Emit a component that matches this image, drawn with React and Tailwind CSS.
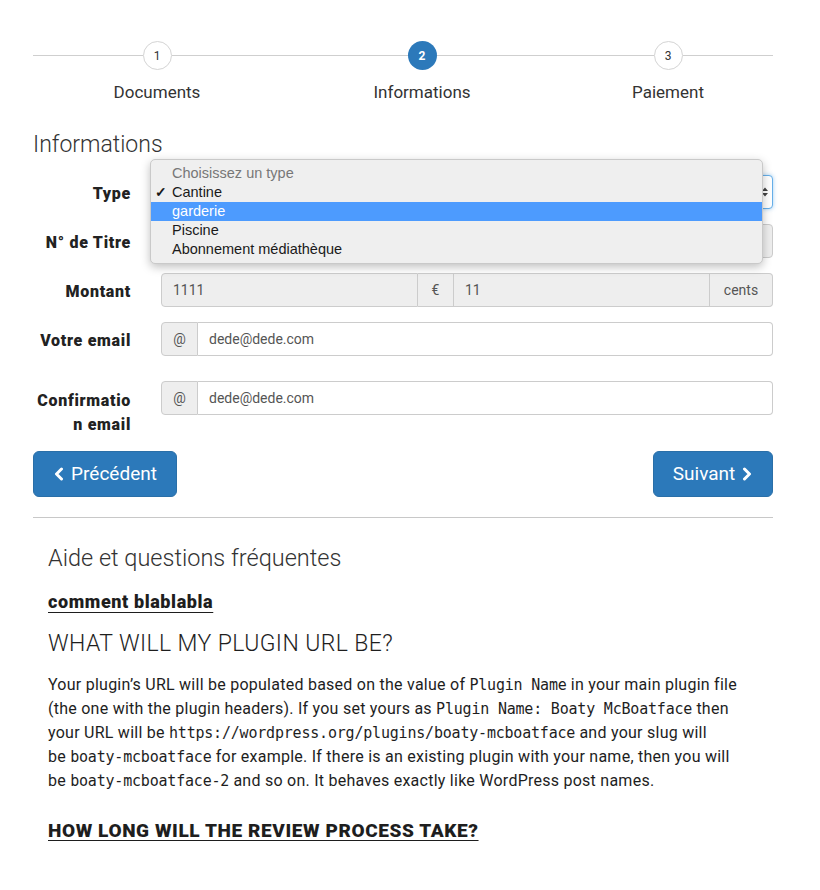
import React from "react";

const BLUE = "bg-[#2c79ba]";

function Step({ n, label, active }) {
  return (
    <div className="flex flex-col items-center">
      <div className="flex w-full items-center">
        <div className="h-px flex-1 bg-[#cfcfcf]" />
        <div
          className={
            "flex h-[29px] w-[29px] items-center justify-center rounded-full text-[12px] " +
            (active
              ? "bg-[#2c79ba] font-bold text-white"
              : "border border-[#d4d4d4] bg-white text-[#333]")
          }
        >
          {n}
        </div>
        <div className="h-px flex-1 bg-[#cfcfcf]" />
      </div>
      <div className="mt-[10px] text-[17px] leading-[24px] text-[#333]">{label}</div>
    </div>
  );
}

function Label({ children, className = "" }) {
  return (
    <div className={"w-[98px] shrink-0 text-right text-[16px] font-black leading-[24px] tracking-[0.7px] text-[#222] " + className}>
      {children}
    </div>
  );
}

function Code({ children }) {
  return <span className="font-['DejaVu_Sans_Mono',monospace] text-[15px] tracking-[-0.2px]">{children}</span>;
}

export default function App() {
  return (
    <div className="min-h-[890px] bg-white font-['Roboto','Liberation_Sans',sans-serif] text-[#333]">
      <div className="ml-[33px] w-[740px] pt-[41px]">
        {/* Stepper */}
        <div className="grid grid-cols-[248px_282px_1fr]">
          <Step n="1" label="Documents" />
          <Step n="2" label="Informations" active />
          <Step n="3" label="Paiement" />
        </div>

        <h2 className="mt-[28px] text-[23px] font-light leading-[26px] text-[#333]">Informations</h2>

        {/* Form */}
        <div className="relative mt-[17px]">
          <div className="flex items-center">
            <Label className="pt-[4px]">Type</Label>
            <div className="ml-[30px] flex h-[34px] flex-1 items-center justify-end rounded-[4px] border border-[#66afe9] bg-white pr-[3px] shadow-[0_0_4px_rgba(102,175,233,0.6)]">
              <svg width="8" height="12" viewBox="0 0 8 12">
                <path d="M1 5 L4 1.5 L7 5 Z M1 7 L4 10.5 L7 7 Z" fill="#444" />
              </svg>
            </div>
          </div>

          <div className="mt-[15px] flex items-center">
            <Label className="pt-[4px]">N° de Titre</Label>
            <div className="ml-[30px] h-[34px] flex-1 rounded-[4px] border border-[#ccc] bg-[#eee]" />
          </div>

          <div className="mt-[15px] flex items-center">
            <Label className="pt-[4px]">Montant</Label>
            <div className="ml-[30px] flex h-[34px] flex-1 text-[14px] text-[#555]">
              <div className="flex flex-1 items-center rounded-l-[4px] border border-[#ccc] bg-[#eee] px-[11px]">1111</div>
              <div className="flex w-[35px] items-center justify-center border-y border-[#ccc] bg-[#eee]">€</div>
              <div className="flex flex-1 items-center border border-[#ccc] bg-[#eee] px-[11px]">11</div>
              <div className="flex w-[63px] items-center justify-center rounded-r-[4px] border-y border-r border-[#ccc] bg-[#eee]">cents</div>
            </div>
          </div>

          <div className="mt-[15px] flex items-center">
            <Label className="pt-[4px]">Votre email</Label>
            <div className="ml-[30px] flex h-[34px] flex-1 text-[14px] text-[#555]">
              <div className="flex w-[37px] items-center justify-center rounded-l-[4px] border border-[#ccc] bg-[#eee]">@</div>
              <div className="flex flex-1 items-center rounded-r-[4px] border-y border-r border-[#ccc] bg-white px-[11px]">dede@dede.com</div>
            </div>
          </div>

          <div className="mt-[25px] flex items-start">
            <Label className="pt-[8px]">
              Confirmatio
              <br />n email
            </Label>
            <div className="ml-[30px] flex h-[34px] flex-1 text-[14px] text-[#555]">
              <div className="flex w-[37px] items-center justify-center rounded-l-[4px] border border-[#ccc] bg-[#eee]">@</div>
              <div className="flex flex-1 items-center rounded-r-[4px] border-y border-r border-[#ccc] bg-white px-[11px]">dede@dede.com</div>
            </div>
          </div>

          {/* Native select popup */}
          <div className="absolute left-[117px] top-[-16px] w-[613px] rounded-[5px] border border-[#c9c9c9] bg-[#efefef] py-[4px] font-['Liberation_Sans',sans-serif] text-[14.5px] leading-[19px] text-[#1a1a1a] shadow-[0_3px_10px_rgba(0,0,0,0.25)]">
            <div className="pl-[21px] text-[#777]">Choisissez un type</div>
            <div className="relative pl-[21px]">
              <span className="absolute left-[4px] top-0 text-[14px] font-bold">✓</span>
              Cantine
            </div>
            <div className="bg-[#4d9bfe] pl-[21px] text-white">garderie</div>
            <div className="pl-[21px]">Piscine</div>
            <div className="pl-[21px]">Abonnement médiathèque</div>
          </div>
        </div>

        {/* Buttons */}
        <div className="mt-[14px] flex justify-between">
          <button className={"flex h-[46px] w-[144px] items-center justify-center gap-[6px] rounded-[6px] border border-[#2a6fa8] " + BLUE + " text-[19px] text-white"}>
            <svg width="12" height="14" viewBox="0 0 12 14">
              <path d="M8.5 2 L3.5 7 L8.5 12" stroke="white" strokeWidth="3" fill="none" strokeLinecap="round" strokeLinejoin="round" />
            </svg>
            Précédent
          </button>
          <button className={"flex h-[46px] w-[120px] items-center justify-center gap-[6px] rounded-[6px] border border-[#2a6fa8] " + BLUE + " text-[19px] text-white"}>
            Suivant
            <svg width="12" height="14" viewBox="0 0 12 14">
              <path d="M3.5 2 L8.5 7 L3.5 12" stroke="white" strokeWidth="3" fill="none" strokeLinecap="round" strokeLinejoin="round" />
            </svg>
          </button>
        </div>

        <div className="mt-[20px] h-px bg-[#c8c8c8]" />

        {/* Help */}
        <div className="px-[15px] text-[#1e1e1e]">
          <h3 className="mt-[27px] text-[23.5px] font-light leading-[26px] text-[#333]">Aide et questions fréquentes</h3>
          <div className="mt-[19px] text-[18px] font-black leading-[24px] tracking-[0.6px] underline underline-offset-[4px]">comment blablabla</div>
          <div className="mt-[17px] text-[23px] font-light leading-[26px] tracking-[0.4px]">WHAT WILL MY PLUGIN URL BE?</div>
          <p className="mt-[16px] whitespace-nowrap text-[16px] leading-[24px] tracking-[0.25px]">
            Your plugin’s URL will be populated based on the value of <Code>Plugin Name</Code> in your main plugin file
            <br />
            (the one with the plugin headers). If you set yours as <Code>Plugin Name: Boaty McBoatface</Code> then
            <br />
            your URL will be <Code>https://wordpress.org/plugins/boaty-mcboatface</Code> and your slug will
            <br />
            be <Code>boaty-mcboatface</Code> for example. If there is an existing plugin with your name, then you will
            <br />
            be <Code>boaty-mcboatface-2</Code> and so on. It behaves exactly like WordPress post names.
          </p>
          <div className="mt-[26px] text-[19px] font-black leading-[24px] tracking-[0.6px] underline underline-offset-[3px]">
            HOW LONG WILL THE REVIEW PROCESS TAKE?
          </div>
        </div>
      </div>
    </div>
  );
}
